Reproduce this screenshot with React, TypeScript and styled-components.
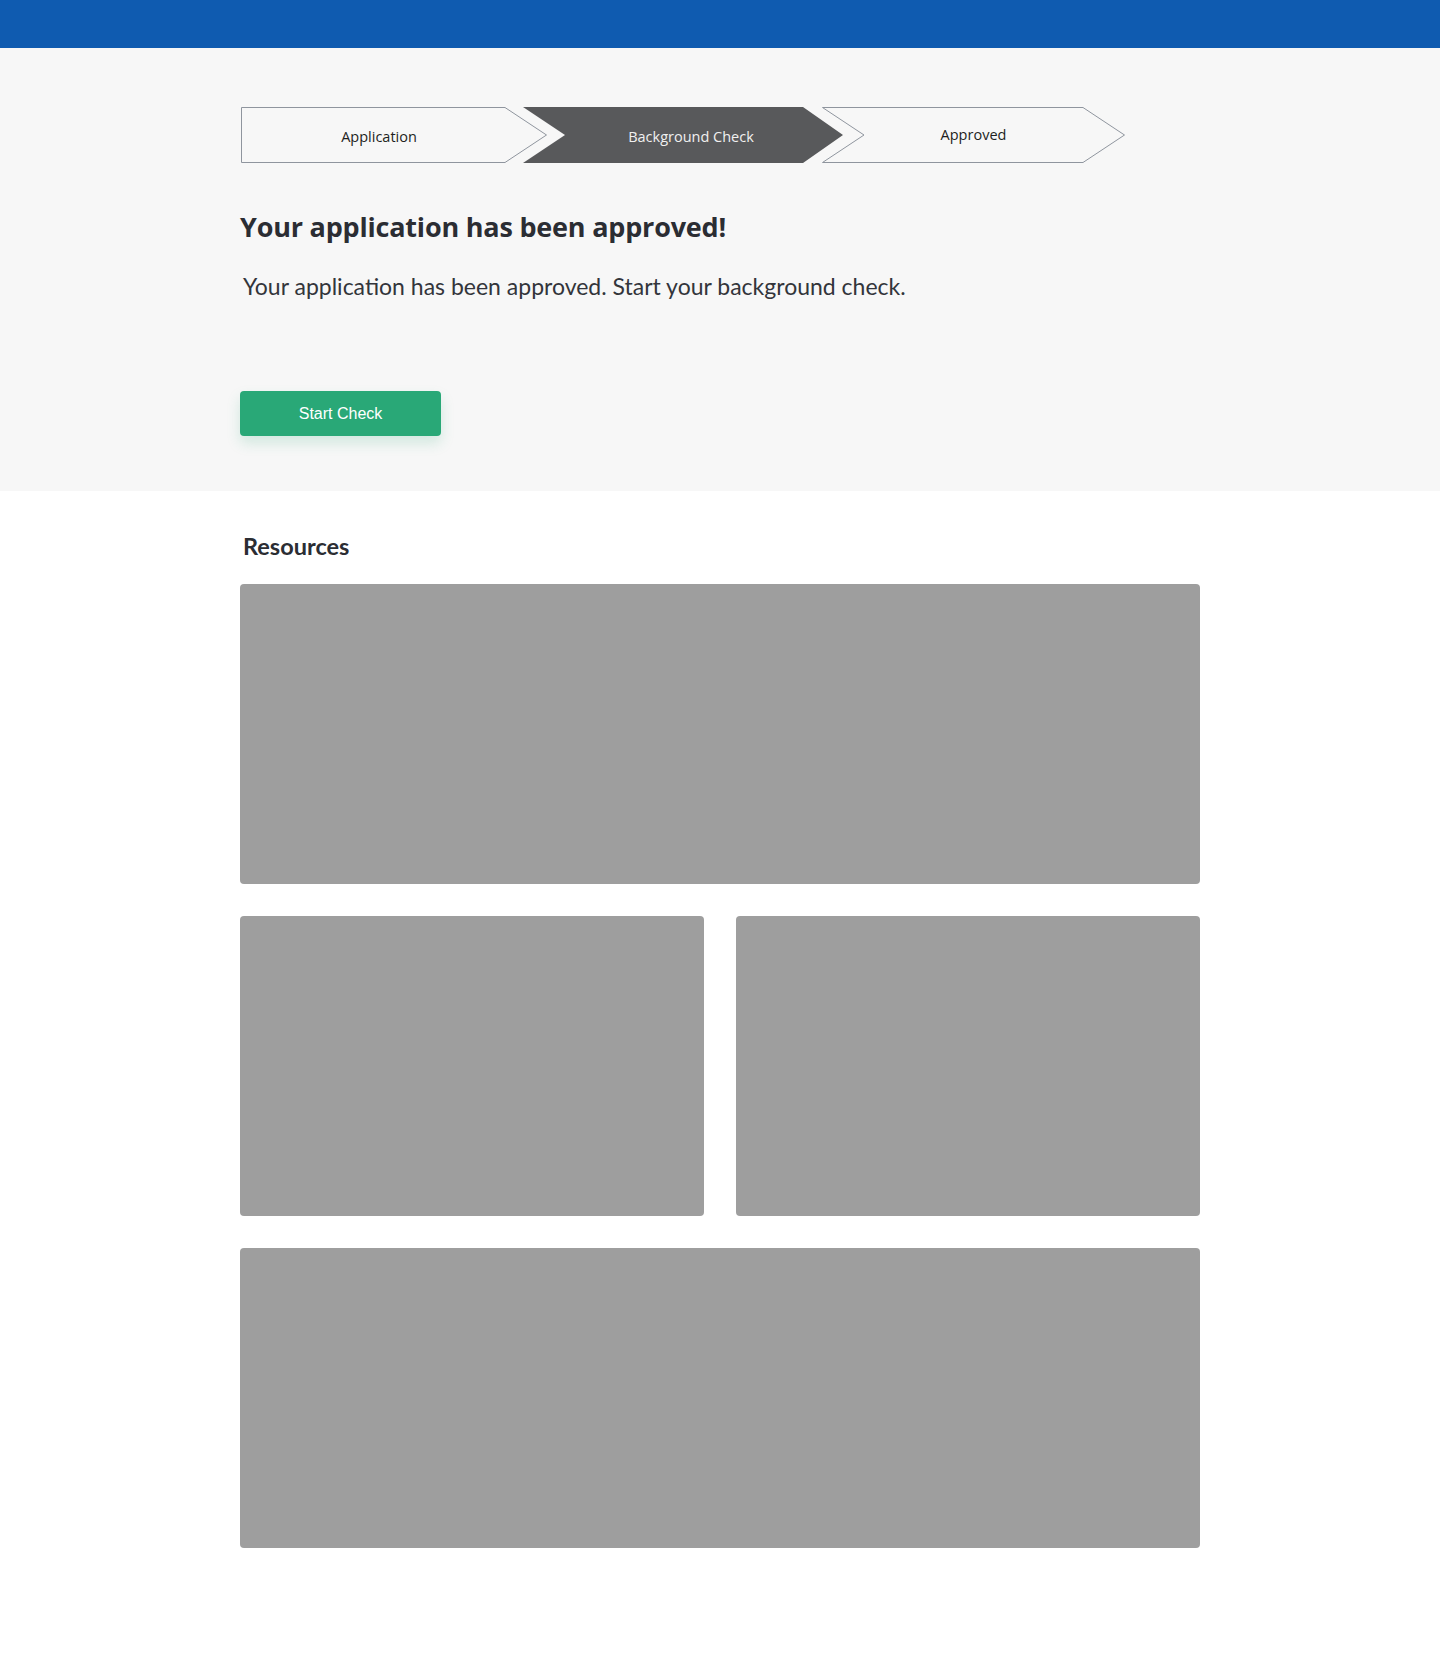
import React from 'react';
import styled, { createGlobalStyle } from 'styled-components';

const GlobalStyle = createGlobalStyle`
  html, body {
    margin: 0;
    padding: 0;
    background: #ffffff;
  }
  body {
    font-family: Lato, "Open Sans", sans-serif;
    color: #2b2d33;
  }
  * {
    box-sizing: border-box;
  }
`;

type StepKind = 'first' | 'active' | 'next';

interface StepDef {
  label: string;
  kind: StepKind;
  width: number;
  shift: number;
  overlap: number;
}

const steps: StepDef[] = [
  { label: 'Application', kind: 'first', width: 306, shift: -15, overlap: 0 },
  { label: 'Background Check', kind: 'active', width: 320, shift: 8, overlap: 24 },
  { label: 'Approved', kind: 'next', width: 303, shift: 0, overlap: 21 },
];

const H = 56;
const DEPTH = 42;

const shapeFor = (kind: StepKind, w: number) => {
  const tip = w - DEPTH;
  if (kind === 'first') {
    return `0.5,0.5 ${tip},0.5 ${w - 0.5},${H / 2} ${tip},${H - 0.5} 0.5,${H - 0.5}`;
  }
  if (kind === 'active') {
    return `0,0 ${tip + 2},0 ${w},${H / 2} ${tip + 2},${H} 0,${H} ${DEPTH},${H / 2}`;
  }
  return `0.5,0.5 ${tip},0.5 ${w - 0.5},${H / 2} ${tip},${H - 0.5} 0.5,${H - 0.5} ${DEPTH},${H / 2}`;
};

const Step = ({ label, kind, width, shift, overlap }: StepDef) => (
  <StepItem $width={width} $overlap={overlap}>
    <svg width={width} height={H} viewBox={`0 0 ${width} ${H}`}>
      <polygon
        points={shapeFor(kind, width)}
        fill={kind === 'active' ? '#58595b' : '#f7f7f7'}
        stroke={kind === 'active' ? 'none' : '#8f959e'}
        strokeWidth={1}
      />
    </svg>
    <StepLabel $active={kind === 'active'} $shift={shift} $raised={kind === 'next'}>
      {label}
    </StepLabel>
  </StepItem>
);

const App = () => {
  return (
    <>
      <GlobalStyle />
      <TopBar />
      <Hero>
        <Container>
          <Stepper>
            {steps.map((s) => (
              <Step key={s.label} {...s} />
            ))}
          </Stepper>
          <Title>Your application has been approved!</Title>
          <Lead>Your application has been approved. Start your background check.</Lead>
          <PrimaryButton type="button">Start Check</PrimaryButton>
        </Container>
      </Hero>
      <ResourcesSection>
        <Container>
          <SectionTitle>Resources</SectionTitle>
          <CardGrid>
            <Card $wide />
            <Card />
            <Card />
            <Card $wide />
          </CardGrid>
        </Container>
      </ResourcesSection>
    </>
  );
};

export default App;

const TopBar = styled.header`
  height: 48px;
  background: #0f5bb0;
`;

const Hero = styled.section`
  background: #f7f7f7;
  padding: 59px 0 55px;
`;

const Container = styled.div`
  width: 960px;
  margin: 0 auto;
`;

const Stepper = styled.div`
  display: flex;
  height: ${H}px;
  padding-left: 1px;
`;

const StepItem = styled.div<{ $width: number; $overlap: number }>`
  position: relative;
  width: ${(p) => p.$width}px;
  height: ${H}px;
  flex: none;
  margin-left: ${(p) => -p.$overlap}px;

  svg {
    position: absolute;
    inset: 0;
    display: block;
  }
`;

const StepLabel = styled.span<{ $active: boolean; $shift: number; $raised: boolean }>`
  position: absolute;
  inset: 0;
  display: flex;
  align-items: center;
  justify-content: center;
  transform: translate(${(p) => p.$shift}px, ${(p) => (p.$raised ? -1 : 1)}px);
  font-family: "Open Sans", sans-serif;
  font-size: 14.5px;
  color: ${(p) => (p.$active ? '#f0f0f0' : '#1e1f22')};
`;

const Title = styled.h1`
  margin: 47px 0 0;
  font-family: "Open Sans", sans-serif;
  font-size: 27px;
  line-height: 34px;
  font-weight: 700;
  color: #2b2d33;
  letter-spacing: -0.2px;
`;

const Lead = styled.p`
  margin: 28px 0 0 3px;
  font-family: Lato, sans-serif;
  font-size: 23px;
  line-height: 28px;
  font-weight: 400;
  color: #33353b;
`;

const PrimaryButton = styled.button`
  display: block;
  margin-top: 91px;
  width: 201px;
  height: 45px;
  border: none;
  border-radius: 4px;
  background: #29a877;
  color: #ffffff;
  font-family: "Liberation Sans", Arial, sans-serif;
  font-size: 16px;
  box-shadow: 0 7px 14px rgba(41, 168, 119, 0.18);
  cursor: pointer;
`;

const ResourcesSection = styled.section`
  background: #ffffff;
  padding: 40px 0 113px;
`;

const SectionTitle = styled.h2`
  margin: 0 0 0 3px;
  font-family: Lato, sans-serif;
  font-size: 23.5px;
  line-height: 30px;
  font-weight: 700;
  color: #2b2d33;
`;

const CardGrid = styled.div`
  display: grid;
  grid-template-columns: 1fr 1fr;
  gap: 32px;
  margin-top: 23px;
`;

const Card = styled.div<{ $wide?: boolean }>`
  grid-column: ${(p) => (p.$wide ? '1 / -1' : 'auto')};
  height: 300px;
  background: #9e9e9e;
  border-radius: 4px;
`;
